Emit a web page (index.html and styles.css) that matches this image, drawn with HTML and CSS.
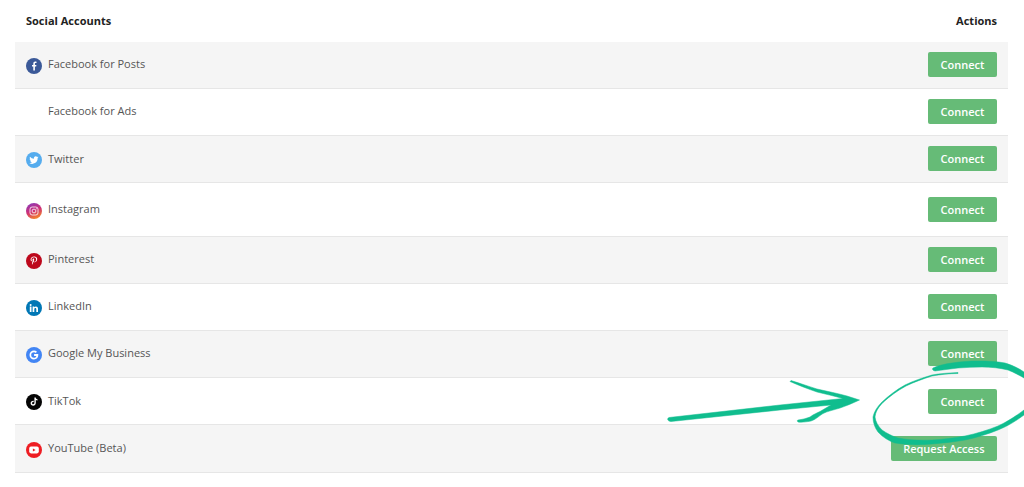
FILE: index.html
```html
<!DOCTYPE html>
<html lang="en">
<head>
<meta charset="utf-8">
<title>Social Accounts</title>
<link rel="stylesheet" href="styles.css">
</head>
<body>
<main class="accounts">
  <header class="head">
    <span>Social Accounts</span>
    <span>Actions</span>
  </header>
  <div class="row shaded">
    <div class="name hi">
      <svg class="icon" viewBox="0 0 16 16"><circle cx="8" cy="8" r="8" fill="#3b5998"/><path d="M8.900 12.600V8.500h1.300l.2-1.600H8.900v-1c0-.5.1-.8.8-.8h.8V3.700c-.2 0-.6-.1-1.200-.1-1.200 0-2 .7-2 2.100v1.200H6v1.600h1.300v4.100z" fill="#fff"/></svg>
      <span>Facebook for Posts</span>
    </div>
    <button class="btn up">Connect</button>
  </div>
  <div class="row">
    <div class="name hi">
      <span class="icon"></span>
      <span>Facebook for Ads</span>
    </div>
    <button class="btn up">Connect</button>
  </div>
  <div class="row shaded">
    <div class="name">
      <svg class="icon" viewBox="0 0 16 16"><circle cx="8" cy="8" r="8" fill="#55acee"/><path d="M12.600 5.300c-.3.150-.7.250-1.100.3.400-.25.700-.6.850-1.050-.35.200-.8.400-1.200.450a1.900 1.900 0 0 0-3.250 1.750A5.400 5.400 0 0 1 3.950 4.750a1.900 1.900 0 0 0 .6 2.550c-.3 0-.6-.1-.85-.25 0 .95.650 1.750 1.500 1.900-.3.080-.55.080-.85.030.25.750.95 1.300 1.800 1.300A3.800 3.800 0 0 1 3.300 11a5.400 5.400 0 0 0 8.300-4.800c.4-.25.750-.55 1-.900z" fill="#fff"/></svg>
      <span>Twitter</span>
    </div>
    <button class="btn up">Connect</button>
  </div>
  <div class="row tall">
    <div class="name">
      <svg class="icon" viewBox="0 0 16 16"><defs><linearGradient id="ig" x1="0.2" y1="0" x2="0.6" y2="1"><stop offset="0" stop-color="#8a3ab9"/><stop offset="0.5" stop-color="#cd2f78"/><stop offset="1" stop-color="#f58529"/></linearGradient></defs><circle cx="8" cy="8" r="8" fill="url(#ig)"/><rect x="4" y="4" width="8" height="8" rx="2.200" fill="none" stroke="#fff" stroke-width=".8"/><circle cx="8" cy="8" r="1.900" fill="none" stroke="#fff" stroke-width=".8"/><circle cx="10.300" cy="5.700" r=".5" fill="#fff"/></svg>
      <span>Instagram</span>
    </div>
    <button class="btn">Connect</button>
  </div>
  <div class="row shaded">
    <div class="name hi">
      <svg class="icon" viewBox="0 0 16 16"><circle cx="8" cy="8" r="8" fill="#bd081c"/><path d="M8.200 3.400c-2.400 0-3.600 1.600-3.600 3 0 .8.300 1.600 1 1.900.1 0 .2 0 .2-.1l.1-.4c0-.1 0-.2-.1-.3-.2-.3-.3-.6-.3-1 0-1.200.9-2.200 2.500-2.200 1.300 0 2.100.8 2.100 1.900 0 1.400-.6 2.600-1.500 2.600-.5 0-.9-.4-.8-.9.200-.6.400-1.200.4-1.700 0-.4-.2-.8-.7-.8-.5 0-1 .6-1 1.300 0 .5.200.8.200.8l-.7 2.800c-.1.600 0 1.400 0 1.500h.1c.1-.1.700-.9.900-1.700l.4-1.400c.2.300.7.600 1.200.6 1.600 0 2.600-1.400 2.600-3.300 0-1.400-1.200-2.600-3-2.600z" fill="#fff"/></svg>
      <span>Pinterest</span>
    </div>
    <button class="btn up">Connect</button>
  </div>
  <div class="row">
    <div class="name hi">
      <svg class="icon" viewBox="0 0 16 16"><circle cx="8" cy="8" r="8" fill="#0077b5"/><path d="M3.800 6.600h1.700v5.300H3.800zM4.650 3.900a1 1 0 1 1 0 2 1 1 0 0 1 0-2zM6.600 6.600h1.600v.75c.3-.5.9-.9 1.750-.9 1.600 0 2.050 1 2.050 2.500v2.950h-1.700V9.300c0-.7-.2-1.300-.9-1.300-.8 0-1.100.6-1.100 1.300v2.600H6.600z" fill="#fff"/></svg>
      <span>LinkedIn</span>
    </div>
    <button class="btn up">Connect</button>
  </div>
  <div class="row shaded">
    <div class="name hi">
      <svg class="icon" viewBox="0 0 16 16"><circle cx="8" cy="8" r="8" fill="#4285f4"/><path d="M8.100 7.100h4.100c.1.400.1.700.1 1 0 2.600-1.700 4.400-4.300 4.400a4.500 4.500 0 0 1 0-9c1.200 0 2.200.4 3 1.200L9.700 5.900c-.3-.3-.9-.7-1.700-.7a2.800 2.800 0 0 0 0 5.600c1.500 0 2.200-1 2.400-1.800H8.100z" fill="#fff"/></svg>
      <span>Google My Business</span>
    </div>
    <button class="btn up">Connect</button>
  </div>
  <div class="row">
    <div class="name">
      <svg class="icon" viewBox="0 0 16 16"><circle cx="8" cy="8" r="8" fill="#050505"/><path d="M8.400 3.500h1.400c.1.900.700 1.600 1.700 1.700v1.400c-.6 0-1.200-.2-1.700-.5v2.900c0 1.600-1.200 2.700-2.600 2.700-1.500 0-2.600-1.100-2.600-2.500 0-1.600 1.400-2.800 3.100-2.500v1.500c-.8-.3-1.600.2-1.600 1 0 .6.500 1.100 1.100 1.100.7 0 1.200-.5 1.200-1.200z" fill="#fff"/></svg>
      <span>TikTok</span>
    </div>
    <button class="btn">Connect</button>
  </div>
  <div class="row shaded last">
    <div class="name">
      <svg class="icon" viewBox="0 0 16 16"><circle cx="8" cy="8" r="8" fill="#ee1d23"/><rect x="3.200" y="4.600" width="9.600" height="6.800" rx="1.800" fill="#fff"/><path d="M6.900 6.400v3.200l2.700-1.600z" fill="#ee1d23"/></svg>
      <span>YouTube (Beta)</span>
    </div>
    <button class="btn">Request Access</button>
  </div>
  <svg class="marks" viewBox="0 0 1024 487" aria-hidden="true">
    <path class="ink" d="M669 417.500L780 405L843 398.500C834 396 825 394 817 392C808 389 798 385 790 381.500L791 380.500C800 383 808 386.500 817 389C828 391.500 838 393.500 847 396L859.500 400C853 403 846 406 840 408C834 410 828 411 823 413.500C819 416 815 420 811 421C806 422 801 422.500 798 422C797 421 797 420.500 798 420C802 419.500 806 418.500 810 417C814 414 817 413 820 411.500L831 405L780 410L671 421.500C667 421 667 418.500 669 417.500Z"/>
    <path class="ink" d="M933 368C938 365.500 945 364 952 363C962 361.500 970 361 978 361C988 361 997 361.500 1005 363C1012 365 1019 368.500 1024 372V378C1019 375 1014 372.500 1008 370C1000 368 991 367 982 367C974 367 966 367.500 958 368C950 369 942 370 935 371C932.500 370.500 932 369 933 368Z"/>
    <path class="ink" d="M958 372.500C948 373 940 373.500 932 375C922 378 913 381 905 385C896 390 889 395.500 882 402C877 407 874 412 873 417C873 423 875 428 878 432C883 437.500 889 441 895 443C907 445 920 445 932 444C943 443 954 442 965 440C977 437.500 988 434 998 430C1007 426.500 1016 421 1024 415V410C1016 416 1007 422 998 426C988 430 977 433.500 965 436C954 438 943 439.500 932 440C920 440.500 908 440 898 438C892 436 887 433.500 882 430C878 426 875.500 421.500 875 417C875.500 412 878 407.500 883 402.500C890 396 897 391 906 386C914 382 923 379 932 376C941 374.500 949 373.500 958 373.500Z"/>
  </svg>
</main>
</body>
</html>
```
FILE: styles.css
```css
html, body {
  margin: 0;
  padding: 0;
  background: #fff;
}
body {
  height: 487px;
  overflow: hidden;
  font-family: "Open Sans", "Liberation Sans", sans-serif;
}
.accounts {
  position: relative;
  box-sizing: border-box;
  width: 1024px;
  height: 487px;
  padding: 0 16px 0 15px;
}
.head {
  display: flex;
  justify-content: space-between;
  align-items: center;
  box-sizing: border-box;
  height: 42px;
  padding: 0 11px 2px;
  font-size: 11px;
  font-weight: 700;
  color: #222;
}
.row {
  display: flex;
  justify-content: space-between;
  align-items: center;
  box-sizing: border-box;
  height: 47px;
  padding: 0 11px;
  border-bottom: 1px solid #e6e6e6;
  font-size: 11px;
  color: #555;
}
.shaded {
  background: #f5f5f5;
}
.tall {
  height: 54px;
}
.last {
  height: 48px;
}
.name {
  display: flex;
  align-items: center;
  gap: 6px;
}
.name > span:last-child {
  margin-top: -2px;
}
.name.hi > span:last-child {
  margin-top: -4px;
}
.icon {
  display: block;
  flex: none;
  width: 16px;
  height: 16px;
  margin-top: 2px;
}
.btn {
  box-sizing: border-box;
  height: 25px;
  min-width: 69px;
  padding: 0 12.500px;
  border: 0;
  border-radius: 2px;
  background: #66bb77;
  color: #fff;
  font: 600 11px "Open Sans", "Liberation Sans", sans-serif;
}
.up {
  margin-top: -2px;
}
.marks {
  position: absolute;
  top: 0;
  left: 0;
  width: 1024px;
  height: 487px;
  pointer-events: none;
}
.ink {
  fill: #10bd8e;
  stroke: #10bd8e;
  stroke-width: .5;
}
```
